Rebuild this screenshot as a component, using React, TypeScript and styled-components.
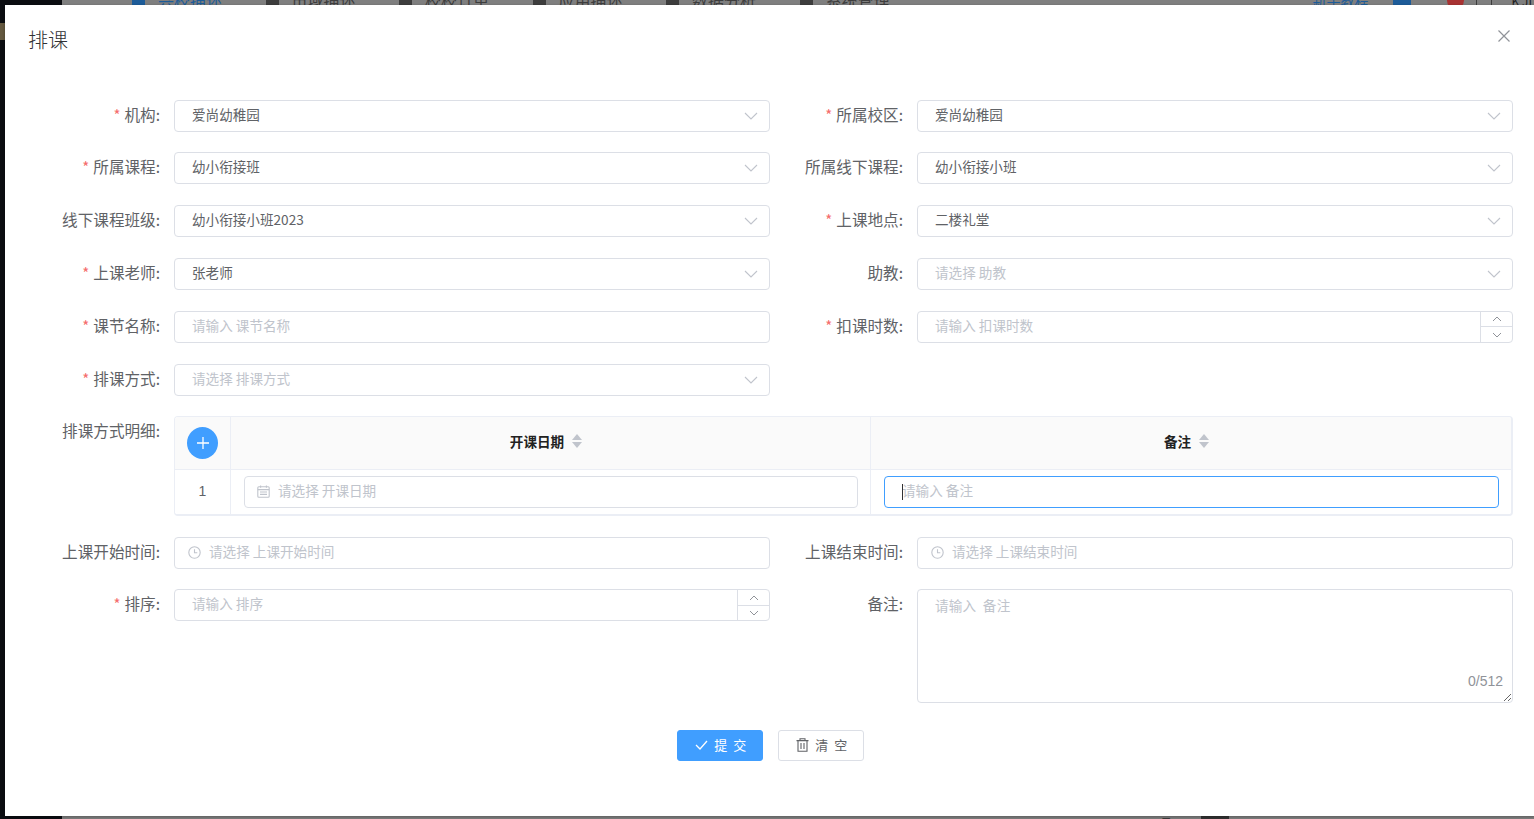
import styled, { createGlobalStyle } from 'styled-components';

const FONT = `'Noto Sans CJK SC', 'Liberation Sans', sans-serif`;

const GlobalStyle = createGlobalStyle`
  html, body {
    margin: 0;
    padding: 0;
    height: 100%;
    overflow: hidden;
    font-family: ${FONT};
  }
  * { box-sizing: border-box; }
`;

const Page = styled.div`
  position: relative;
  display: flex;
  width: 1534px;
  height: 819px;
  overflow: hidden;
  background: #7f7f7f;
`;

const Sidebar = styled.aside`
  width: 62px;
  flex-shrink: 0;
  padding-top: 23px;
  background: #0b0d11;
`;

const SidebarLogo = styled.div`
  height: 17px;
  background: #64583f;
`;

const Main = styled.div`
  flex: 1;
  display: flex;
  flex-direction: column;
  justify-content: space-between;
`;

const Nav = styled.nav`
  display: flex;
  align-items: center;
  height: 20px;
  margin-top: -10px;
  padding-left: 70px;
`;

const NavItem = styled.div<{ $active?: boolean }>`
  display: flex;
  align-items: center;
  gap: 13px;
  width: 133.5px;
  font-size: 16px;
  color: ${({ $active }) => ($active ? '#1d5c99' : '#3d3d3d')};
`;

const NavIcon = styled.span<{ $active?: boolean }>`
  width: 13px;
  height: 14px;
  background: ${({ $active }) => ($active ? '#1d5c99' : '#3d3d3d')};
`;

const NavRight = styled.div`
  display: flex;
  align-items: center;
  margin-left: auto;
  margin-right: 2px;
  font-size: 14px;
`;

const GuideLink = styled.span`
  color: #1d5c99;
  margin-right: 24px;
`;

const BlueSquare = styled.span`
  width: 18px;
  height: 18px;
  background: #1d5c99;
  margin-right: 36px;
`;

const RedDot = styled.span`
  width: 17px;
  height: 17px;
  border-radius: 50%;
  background: #a83232;
  margin-right: 12px;
`;

const NavGhost = styled.span`
  width: 16px;
  height: 16px;
  border: 1px solid #3d3d3d;
  margin-right: 20px;
`;

const NavUser = styled.span`
  color: #222;
  font-size: 12px;
`;

const Footer = styled.div`
  display: flex;
  align-items: flex-start;
  height: 3px;
  overflow: hidden;
  padding-left: 1100px;
  font-size: 14px;
  line-height: 14px;
  color: #3a3a3a;
`;

const FooterBar = styled.span`
  width: 28px;
  height: 3px;
  background: #333;
`;

const Modal = styled.div`
  position: absolute;
  top: 5px;
  left: 5px;
  width: 1530px;
  height: 811px;
  background: #fff;
  box-shadow: 0 1px 3px rgba(0, 0, 0, 0.3);
`;

const Header = styled.header`
  padding: 20px 23px;
`;

const Title = styled.span`
  display: block;
  font-size: 20px;
  font-weight: 300;
  line-height: 30px;
  color: #303133;
`;

const CloseButton = styled.button`
  position: absolute;
  top: 24px;
  right: 24px;
  display: flex;
  padding: 0;
  border: 0;
  background: none;
  color: #909399;
`;

const FormGrid = styled.form`
  display: grid;
  grid-template-columns: 765px 743px;
  row-gap: 20.8px;
  margin-top: 24.6px;
`;

const Field = styled.div<{ $right?: boolean; $wide?: boolean }>`
  display: grid;
  grid-template-columns: ${({ $right }) => ($right ? '133px' : '155px')} ${({ $wide }) =>
      $wide ? '1339px' : '596px'};
  column-gap: 14px;
  align-items: start;
  grid-column: ${({ $wide }) => ($wide ? '1 / -1' : 'auto')};
`;

const Label = styled.label`
  font-size: 15.6px;
  line-height: 28px;
  color: #606266;
  text-align: right;
  white-space: nowrap;
`;

const Required = styled.span`
  color: #f56c6c;
  margin-right: 4px;
  font-size: 15px;
`;

const Box = styled.div`
  display: flex;
  align-items: center;
  height: 32px;
  border: 1px solid #dcdfe6;
  border-radius: 4px;
  background: #fff;
  font-size: 13.6px;
  color: #606266;
`;

const SelectBox = styled(Box)`
  justify-content: space-between;
  padding: 0 11px 0 17px;
`;

const ValueText = styled.span`
  padding-bottom: 4px;
`;

const PlaceholderText = styled(ValueText)`
  color: #c0c4cc;
`;

const TextInput = styled.input`
  flex: 1;
  width: 100%;
  min-width: 0;
  height: 100%;
  border: 0;
  outline: 0;
  padding: 0 0 4px 17px;
  background: transparent;
  font: inherit;
  color: inherit;
  &::placeholder {
    color: #c0c4cc;
    opacity: 1;
  }
`;

const IconInput = styled(TextInput)`
  padding-left: 8px;
`;

const IconBox = styled(Box)`
  padding-left: 13px;
  color: #c0c4cc;
`;

const CellBox = styled(IconBox)<{ $focused?: boolean }>`
  position: relative;
  flex: 1;
  padding-left: ${({ $focused }) => ($focused ? '0' : '12px')};
  border-color: ${({ $focused }) => ($focused ? '#409eff' : '#dcdfe6')};
`;

const Caret = styled.span`
  position: absolute;
  left: 17px;
  top: 7px;
  width: 1px;
  height: 16px;
  background: #303133;
`;

const Stepper = styled.div`
  display: flex;
  flex-direction: column;
  flex-shrink: 0;
  width: 32px;
  height: 100%;
  border-left: 1px solid #dcdfe6;
  color: #909399;
`;

const StepperButton = styled.span<{ $bottom?: boolean }>`
  flex: 1;
  display: flex;
  align-items: center;
  justify-content: center;
  border-top: ${({ $bottom }) => ($bottom ? '1px solid #dcdfe6' : '0')};
`;

const Table = styled.div`
  border: 1px solid #ebeef5;
  border-right-width: 2px;
  border-bottom-width: 2px;
  border-radius: 4px;
  height: 99.45px;
  overflow: hidden;
`;

const TableRow = styled.div<{ $head?: boolean }>`
  display: grid;
  grid-template-columns: 56px 640px 1fr;
  height: ${({ $head }) => ($head ? '53px' : '45px')};
  background: ${({ $head }) => ($head ? '#fafafa' : '#fff')};
  border-bottom: ${({ $head }) => ($head ? '1px solid #ebeef5' : '0')};
`;

const TableCell = styled.div<{ $padded?: boolean; $sortable?: boolean }>`
  display: flex;
  align-items: center;
  justify-content: center;
  gap: 8px;
  padding: ${({ $padded, $sortable }) =>
    $padded ? '0 12px 2px 13px' : $sortable ? '0 9px 5px 0' : '0'};
  border-right: 1px solid #ebeef5;
  font-size: 13.6px;
  font-weight: 400;
  color: #222;
  &:last-child {
    border-right: 0;
  }
`;

const ColumnTitle = styled.span`
  font-weight: 700;
`;

const RowIndex = styled.span`
  font-family: 'Liberation Sans', sans-serif;
  font-size: 14px;
  padding-bottom: 4px;
  color: #606266;
`;

const AddButton = styled.button`
  display: flex;
  align-items: center;
  justify-content: center;
  width: 31px;
  height: 32px;
  padding: 0;
  border: 0;
  border-radius: 50%;
  background: #409eff;
  color: #fff;
`;

const SortCaret = styled.span`
  display: flex;
  flex-direction: column;
  gap: 2px;
  padding-top: 1px;
  color: #c0c4cc;
`;

const TextareaWrap = styled.div`
  position: relative;
  display: flex;
  height: 114px;
`;

const Textarea = styled.textarea`
  width: 100%;
  height: 100%;
  padding: 4px 17px;
  border: 1px solid #dcdfe6;
  border-radius: 4px;
  outline: 0;
  font-family: ${FONT};
  font-size: 13.6px;
  line-height: 22px;
  letter-spacing: 0.2px;
  color: #606266;
  resize: vertical;
  &::placeholder {
    color: #c0c4cc;
    opacity: 1;
  }
`;

const Counter = styled.span`
  position: absolute;
  right: 10px;
  bottom: 14px;
  font-family: 'Liberation Sans', sans-serif;
  font-size: 14px;
  line-height: 15px;
  color: #909399;
`;

const Actions = styled.div`
  display: flex;
  justify-content: center;
  gap: 15px;
  margin-top: 27px;
`;

const ActionButton = styled.button<{ $primary?: boolean }>`
  display: flex;
  align-items: center;
  justify-content: center;
  gap: 6px;
  width: 86px;
  height: 31px;
  padding: 0 0 2px 4px;
  border: 1px solid ${({ $primary }) => ($primary ? '#409eff' : '#dcdfe6')};
  border-radius: 3px;
  background: ${({ $primary }) => ($primary ? '#409eff' : '#fff')};
  color: ${({ $primary }) => ($primary ? '#fff' : '#606266')};
  font-family: ${FONT};
  font-size: 13px;
  letter-spacing: 1.5px;
`;

const ChevronDown = () => (
  <svg width="14" height="8" viewBox="0 0 14 8" fill="none" stroke="#c0c4cc" strokeWidth="1.1">
    <path d="M1 1l6 6 6-6" />
  </svg>
);

const SmallChevron = ({ up }: { up?: boolean }) => (
  <svg width="10" height="6" viewBox="0 0 10 6" fill="none" stroke="currentColor" strokeWidth="1">
    <path d={up ? 'M1 5l4-4 4 4' : 'M1 1l4 4 4-4'} />
  </svg>
);

const ClockIcon = () => (
  <svg width="13" height="13" viewBox="0 0 13 13" fill="none" stroke="currentColor" strokeWidth="1.1">
    <circle cx="6.5" cy="6.5" r="5.7" />
    <path d="M6.5 3.2v3.6h2.8" />
  </svg>
);

const CalendarIcon = () => (
  <svg width="13" height="13" viewBox="0 0 13 13" fill="none" stroke="currentColor" strokeWidth="1.1">
    <rect x="0.8" y="1.8" width="11.4" height="10.4" rx="1" />
    <path d="M0.8 4.6h11.4M3.6 0.4v2.4M9.4 0.4v2.4M3 7h7M3 9.4h7" />
  </svg>
);

const SortIcon = () => (
  <SortCaret>
    <svg width="10" height="6" viewBox="0 0 10 6" fill="currentColor">
      <path d="M5 0l5 6H0z" />
    </svg>
    <svg width="10" height="6" viewBox="0 0 10 6" fill="currentColor">
      <path d="M5 6l5-6H0z" />
    </svg>
  </SortCaret>
);

const TextSelect = ({ value, placeholder }: { value?: string; placeholder?: string }) => (
  <SelectBox>
    {value ? <ValueText>{value}</ValueText> : <PlaceholderText>{placeholder}</PlaceholderText>}
    <ChevronDown />
  </SelectBox>
);

const NumberInput = ({ placeholder }: { placeholder: string }) => (
  <Box>
    <TextInput placeholder={placeholder} />
    <Stepper>
      <StepperButton>
        <SmallChevron up />
      </StepperButton>
      <StepperButton $bottom>
        <SmallChevron />
      </StepperButton>
    </Stepper>
  </Box>
);

const navItems = ['兴校描述', '市域描述', '校校订单', '应用描述', '数据分析', '系统管理'];

export default function App() {
  return (
    <Page>
      <GlobalStyle />
      <Sidebar>
        <SidebarLogo />
      </Sidebar>
      <Main>
        <Nav>
          {navItems.map((item, i) => (
            <NavItem key={item} $active={i === 0}>
              <NavIcon $active={i === 0} />
              {item}
            </NavItem>
          ))}
          <NavRight>
            <GuideLink>新手教程</GuideLink>
            <BlueSquare />
            <RedDot />
            <NavGhost />
            <NavUser>K JI</NavUser>
          </NavRight>
        </Nav>
        <Footer>
          T1000
          <FooterBar />
        </Footer>
      </Main>

      <Modal>
        <Header>
          <Title>排课</Title>
        </Header>
        <CloseButton type="button" aria-label="关闭">
          <svg width="14" height="14" viewBox="0 0 14 14" fill="none" stroke="currentColor" strokeWidth="1.2">
            <path d="M1.5 1.5l11 11M12.5 1.5l-11 11" />
          </svg>
        </CloseButton>

        <FormGrid>
          <Field>
            <Label><Required>*</Required>机构:</Label>
            <TextSelect value="爱尚幼稚园" />
          </Field>
          <Field $right>
            <Label><Required>*</Required>所属校区:</Label>
            <TextSelect value="爱尚幼稚园" />
          </Field>

          <Field>
            <Label><Required>*</Required>所属课程:</Label>
            <TextSelect value="幼小衔接班" />
          </Field>
          <Field $right>
            <Label>所属线下课程:</Label>
            <TextSelect value="幼小衔接小班" />
          </Field>

          <Field>
            <Label>线下课程班级:</Label>
            <TextSelect value="幼小衔接小班2023" />
          </Field>
          <Field $right>
            <Label><Required>*</Required>上课地点:</Label>
            <TextSelect value="二楼礼堂" />
          </Field>

          <Field>
            <Label><Required>*</Required>上课老师:</Label>
            <TextSelect value="张老师" />
          </Field>
          <Field $right>
            <Label>助教:</Label>
            <TextSelect placeholder="请选择 助教" />
          </Field>

          <Field>
            <Label><Required>*</Required>课节名称:</Label>
            <Box>
              <TextInput placeholder="请输入 课节名称" />
            </Box>
          </Field>
          <Field $right>
            <Label><Required>*</Required>扣课时数:</Label>
            <NumberInput placeholder="请输入 扣课时数" />
          </Field>

          <Field>
            <Label><Required>*</Required>排课方式:</Label>
            <TextSelect placeholder="请选择 排课方式" />
          </Field>
          <div />

          <Field $wide>
            <Label>排课方式明细:</Label>
            <Table>
              <TableRow $head>
                <TableCell>
                  <AddButton type="button" aria-label="添加">
                    <svg width="14" height="14" viewBox="0 0 14 14" stroke="currentColor" strokeWidth="1.3">
                      <path d="M7 1v12M1 7h12" />
                    </svg>
                  </AddButton>
                </TableCell>
                <TableCell $sortable>
                  <ColumnTitle>开课日期</ColumnTitle>
                  <SortIcon />
                </TableCell>
                <TableCell $sortable>
                  <ColumnTitle>备注</ColumnTitle>
                  <SortIcon />
                </TableCell>
              </TableRow>
              <TableRow>
                <TableCell>
                  <RowIndex>1</RowIndex>
                </TableCell>
                <TableCell $padded>
                  <CellBox>
                    <CalendarIcon />
                    <IconInput placeholder="请选择 开课日期" />
                  </CellBox>
                </TableCell>
                <TableCell $padded>
                  <CellBox $focused>
                    <TextInput placeholder="请输入 备注" />
                    <Caret />
                  </CellBox>
                </TableCell>
              </TableRow>
            </Table>
          </Field>

          <Field>
            <Label>上课开始时间:</Label>
            <IconBox>
              <ClockIcon />
              <IconInput placeholder="请选择 上课开始时间" />
            </IconBox>
          </Field>
          <Field $right>
            <Label>上课结束时间:</Label>
            <IconBox>
              <ClockIcon />
              <IconInput placeholder="请选择 上课结束时间" />
            </IconBox>
          </Field>

          <Field>
            <Label><Required>*</Required>排序:</Label>
            <NumberInput placeholder="请输入 排序" />
          </Field>
          <Field $right>
            <Label>备注:</Label>
            <TextareaWrap>
              <Textarea placeholder="请输入  备注" />
              <Counter>0/512</Counter>
            </TextareaWrap>
          </Field>
        </FormGrid>

        <Actions>
          <ActionButton type="button" $primary>
            <svg width="13" height="10" viewBox="0 0 13 10" fill="none" stroke="currentColor" strokeWidth="1.3">
              <path d="M1 5l4 4 7-8" />
            </svg>
            提 交
          </ActionButton>
          <ActionButton type="button">
            <svg width="13" height="14" viewBox="0 0 13 14" fill="none" stroke="currentColor" strokeWidth="1.1">
              <path d="M0.5 2.6h12M4 2.6V0.8h5v1.8M2 2.6v10.6h9V2.6M5 5v6M8 5v6" />
            </svg>
            清 空
          </ActionButton>
        </Actions>
      </Modal>
    </Page>
  );
}
